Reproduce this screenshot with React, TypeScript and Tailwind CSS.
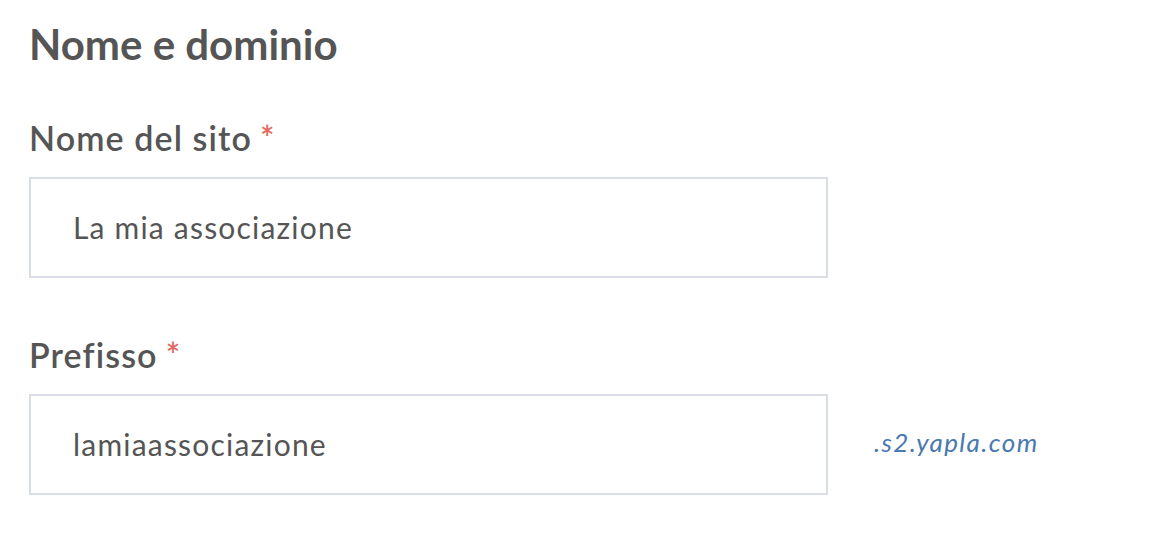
export default function App() {
  const font = { fontFamily: "Lato, 'Noto Sans', sans-serif" };
  return (
    <div className="min-h-screen w-full bg-white pl-[29px] pt-[20px] text-[#555555]" style={font}>
      <h2 className="text-[42px] font-bold leading-[48px] text-[#555555]">Nome e dominio</h2>

      <div className="mt-[50px] flex items-start text-[34px] font-semibold leading-[40px] tracking-[1.1px]">
        <span>Nome del sito</span>
        <span className="ml-[8px] text-[#e26a5f]">*</span>
      </div>
      <div className="mt-[19px] flex h-[101px] w-[799px] items-center border-2 border-[#d9dee6] pl-[42px] text-[30px] tracking-[1.2px] text-[#555555]">
        La mia associazione
      </div>

      <div className="mt-[57px] flex items-start text-[34px] font-semibold leading-[40px] tracking-[1.1px]">
        <span>Prefisso</span>
        <span className="ml-[8px] text-[#e26a5f]">*</span>
      </div>
      <div className="mt-[19px] flex items-center">
        <div className="flex h-[101px] w-[799px] items-center border-2 border-[#d9dee6] pl-[42px] text-[30px] tracking-[1.2px] text-[#555555]">
          lamiaassociazione
        </div>
        <span className="ml-[46px] mb-[4px] text-[26px] italic tracking-[1.4px] text-[#4a78b0]">.s2.yapla.com</span>
      </div>
    </div>
  );
}
